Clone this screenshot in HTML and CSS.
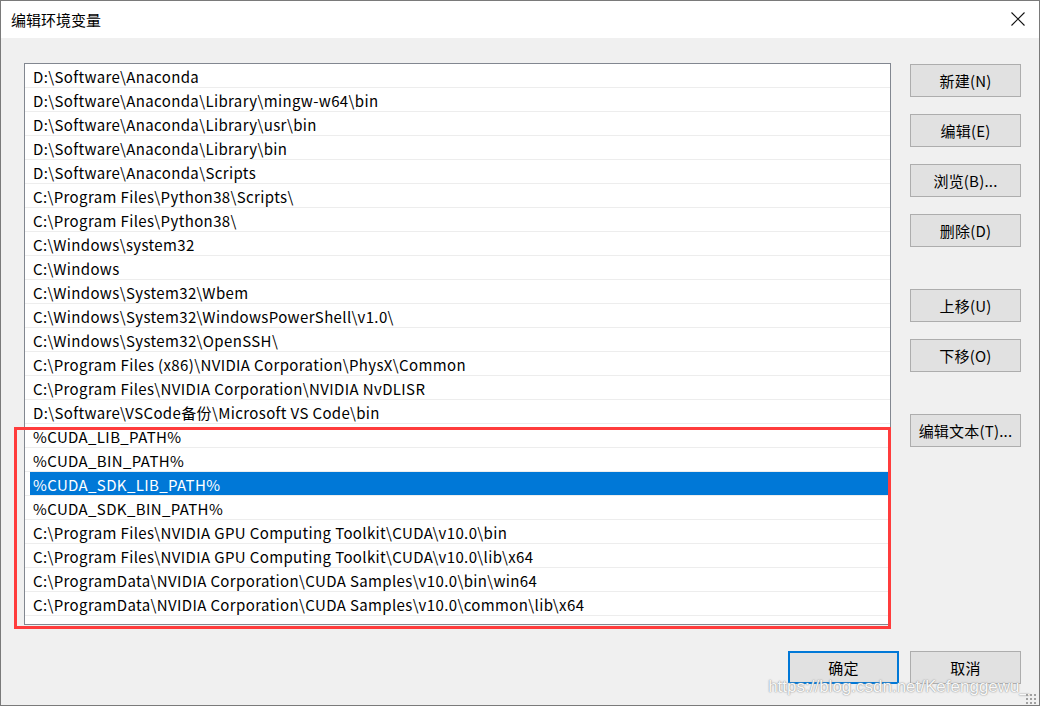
FILE: index.html
```html
<!DOCTYPE html>
<html lang="zh-CN">
<head>
    <meta charset="UTF-8">
    <title>编辑环境变量</title>
    <link rel="stylesheet" href="styles.css">
</head>
<body>
    <div class="window">
        <div class="titlebar">
            <span class="title">编辑环境变量</span>
            <svg class="close" width="14" height="14" viewBox="0 0 14 14">
                <path d="M0.5 0.5 L13.5 13.5 M13.5 0.5 L0.5 13.5" stroke="#111" stroke-width="1.1" fill="none"/>
            </svg>
        </div>
        <div class="content">
            <div class="main">
                <div class="list-wrap">
                    <div class="list">
                        <div class="row"><span>D:\Software\Anaconda</span></div>
                        <div class="row"><span>D:\Software\Anaconda\Library\mingw-w64\bin</span></div>
                        <div class="row"><span>D:\Software\Anaconda\Library\usr\bin</span></div>
                        <div class="row"><span>D:\Software\Anaconda\Library\bin</span></div>
                        <div class="row"><span>D:\Software\Anaconda\Scripts</span></div>
                        <div class="row"><span>C:\Program Files\Python38\Scripts\</span></div>
                        <div class="row"><span>C:\Program Files\Python38\</span></div>
                        <div class="row"><span>C:\Windows\system32</span></div>
                        <div class="row"><span>C:\Windows</span></div>
                        <div class="row"><span>C:\Windows\System32\Wbem</span></div>
                        <div class="row"><span>C:\Windows\System32\WindowsPowerShell\v1.0\</span></div>
                        <div class="row"><span>C:\Windows\System32\OpenSSH\</span></div>
                        <div class="row"><span>C:\Program Files (x86)\NVIDIA Corporation\PhysX\Common</span></div>
                        <div class="row"><span>C:\Program Files\NVIDIA Corporation\NVIDIA NvDLISR</span></div>
                        <div class="row"><span>D:\Software\VSCode备份\Microsoft VS Code\bin</span></div>
                        <div class="row"><span>%CUDA_LIB_PATH%</span></div>
                        <div class="row"><span>%CUDA_BIN_PATH%</span></div>
                        <div class="row selected"><span>%CUDA_SDK_LIB_PATH%</span></div>
                        <div class="row"><span>%CUDA_SDK_BIN_PATH%</span></div>
                        <div class="row"><span>C:\Program Files\NVIDIA GPU Computing Toolkit\CUDA\v10.0\bin</span></div>
                        <div class="row"><span>C:\Program Files\NVIDIA GPU Computing Toolkit\CUDA\v10.0\lib\x64</span></div>
                        <div class="row"><span>C:\ProgramData\NVIDIA Corporation\CUDA Samples\v10.0\bin\win64</span></div>
                        <div class="row"><span>C:\ProgramData\NVIDIA Corporation\CUDA Samples\v10.0\common\lib\x64</span></div>
                    </div>
                    <div class="highlight-box"></div>
                </div>
                <div class="side">
                    <div class="group">
                        <button class="btn">新建(N)</button>
                        <button class="btn">编辑(E)</button>
                        <button class="btn">浏览(B)...</button>
                        <button class="btn">删除(D)</button>
                    </div>
                    <div class="group">
                        <button class="btn">上移(U)</button>
                        <button class="btn">下移(O)</button>
                    </div>
                    <div class="group">
                        <button class="btn">编辑文本(T)...</button>
                    </div>
                </div>
            </div>
            <div class="footer">
                <button class="btn default">确定</button>
                <button class="btn">取消</button>
                <span class="watermark">https://blog.csdn.net/Kefenggewu_</span>
                <span class="grip"></span>
            </div>
        </div>
    </div>
</body>
</html>
```

FILE: styles.css
```css
* {
    box-sizing: border-box;
}
body {
    margin: 0;
    font-family: "Noto Sans CJK SC", "Noto Sans", sans-serif;
    font-size: 15px;
    color: #000;
}
.window {
    width: 1040px;
    height: 706px;
    border: 1px solid #7a7a7a;
    background: #f0f0f0;
    display: flex;
    flex-direction: column;
}
.titlebar {
    height: 37px;
    background: #fff;
    display: flex;
    align-items: center;
    justify-content: space-between;
    padding: 0 14px 0 10px;
    flex-shrink: 0;
}
.title {
    font-size: 15px;
    margin-top: -1px;
}
.close {
    margin-top: -1px;
}
.content {
    flex: 1;
    padding: 25px 18px 0 23px;
    display: flex;
    flex-direction: column;
}
.main {
    display: flex;
    gap: 19px;
}
.list-wrap {
    position: relative;
}
.list {
    width: 867px;
    height: 562px;
    background: #fff;
    border: 1px solid #828790;
}
.row {
    height: 24px;
    border-bottom: 1px solid #ededed;
    padding-left: 5px;
}
.row span {
    display: block;
    height: 23px;
    line-height: 25px;
    padding-left: 3px;
    white-space: nowrap;
    letter-spacing: 0.37px;
}
.row.selected span {
    background: #0078d7;
    color: #fff;
}
.highlight-box {
    position: absolute;
    left: -10px;
    top: 364px;
    width: 877px;
    height: 202px;
    border: 3px solid #ff3c3c;
}
.side {
    padding-top: 1px;
    display: flex;
    flex-direction: column;
    gap: 42px;
}
.group {
    display: flex;
    flex-direction: column;
    gap: 17px;
}
.btn {
    width: 111px;
    height: 33px;
    background: #e1e1e1;
    border: 1px solid #adadad;
    font-family: inherit;
    font-size: 15px;
    color: #000;
    padding: 0;
    margin: 0;
    letter-spacing: 0.2px;
}
.footer {
    position: relative;
    display: flex;
    justify-content: flex-end;
    gap: 11px;
    margin-top: 26px;
}
.btn.default {
    border: 2px solid #0078d7;
}
.watermark {
    position: absolute;
    right: -8px;
    top: 26px;
    font-family: "Liberation Sans", sans-serif;
    font-size: 17px;
    color: rgba(255, 255, 255, 0.95);
    text-shadow: 0 0 1px #888, 0 0 2px #aaa;
}
.grip {
    position: absolute;
    right: -16px;
    top: 42px;
    width: 12px;
    height: 12px;
    background-image: radial-gradient(#a0a0a0 1px, transparent 1.2px);
    background-size: 4px 4px;
}
```
